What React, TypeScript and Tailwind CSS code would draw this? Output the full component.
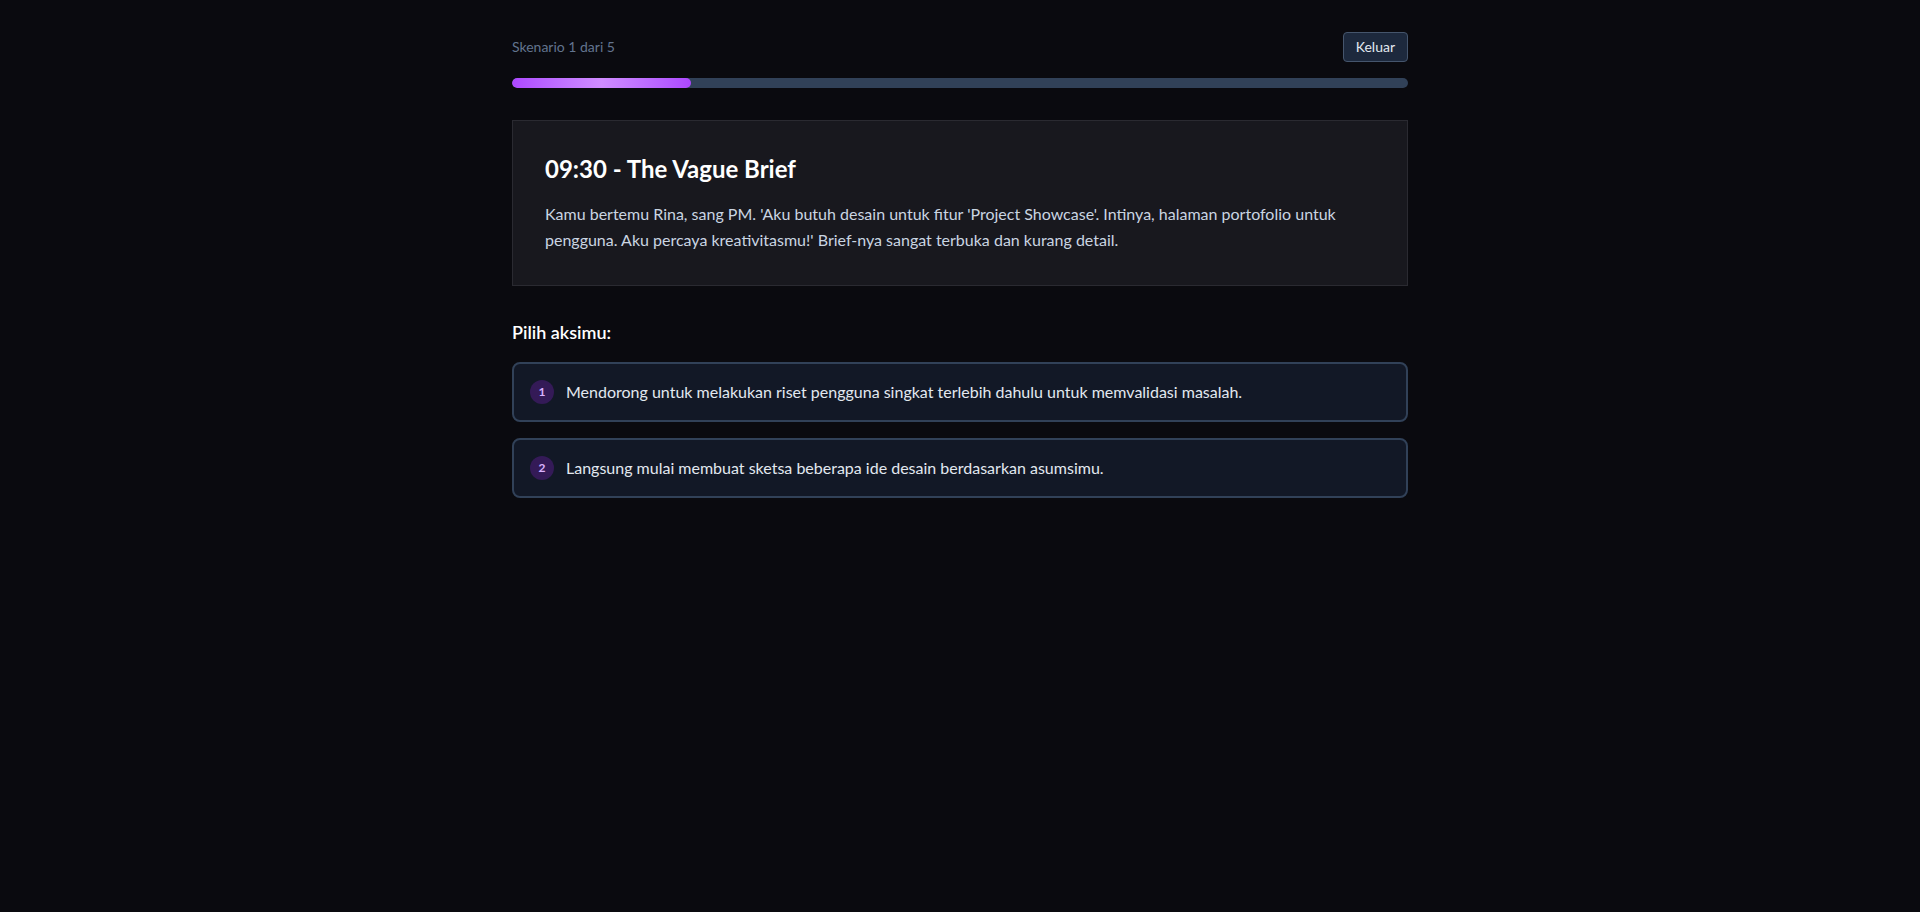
import React from "react";

const options = [
  "Mendorong untuk melakukan riset pengguna singkat terlebih dahulu untuk memvalidasi masalah.",
  "Langsung mulai membuat sketsa beberapa ide desain berdasarkan asumsimu.",
];

export default function App() {
  return (
    <div
      className="min-h-[912px] w-full bg-[#0a0a0f] text-slate-200"
      style={{ fontFamily: '"Segoe UI", Lato, "Noto Sans", sans-serif' }}
    >
      <div className="mx-auto max-w-4xl py-8">
        <div className="mb-4 flex items-center justify-between">
          <span className="text-sm text-slate-500">Skenario 1 dari 5</span>
          <button className="rounded border border-slate-600 bg-slate-800 px-3 py-1 text-sm text-slate-200">
            Keluar
          </button>
        </div>
        <div className="mb-8 h-2.5 w-full overflow-hidden rounded-full bg-slate-700">
          <div className="h-full w-[20%] rounded-full bg-gradient-to-r from-purple-500 via-[#d08cff] to-purple-500" />
        </div>

        <div className="border border-[#2a2a31] bg-[#18181e] p-8">
          <h2 className="mb-4 text-2xl font-bold text-white">09:30 - The Vague Brief</h2>
          <p className="text-base leading-relaxed text-slate-300">
            Kamu bertemu Rina, sang PM. 'Aku butuh desain untuk fitur 'Project Showcase'. Intinya,
            halaman portofolio untuk pengguna. Aku percaya kreativitasmu!' Brief-nya sangat terbuka
            dan kurang detail.
          </p>
        </div>

        <h3 className="mb-4 mt-8 text-lg font-semibold text-white">Pilih aksimu:</h3>
        <div className="flex flex-col gap-4">
          {options.map((o, i) => (
            <button
              key={i}
              className="flex min-h-[60px] items-center gap-3 rounded-lg border-2 border-slate-700 bg-[#121826] px-4 text-left"
            >
              <span className="flex h-6 w-6 shrink-0 items-center justify-center rounded-full bg-[#341a57] text-xs font-bold text-purple-300">
                {i + 1}
              </span>
              <span className="text-base text-slate-200">{o}</span>
            </button>
          ))}
        </div>
      </div>
    </div>
  );
}
